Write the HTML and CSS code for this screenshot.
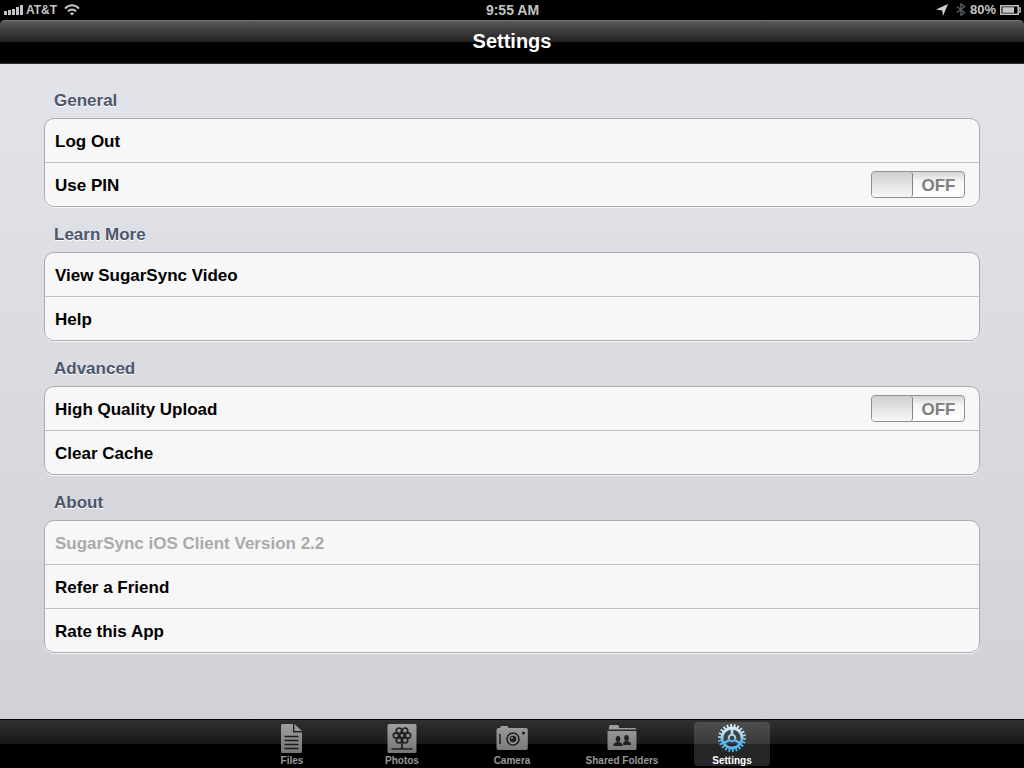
FILE: index.html
```html
<!DOCTYPE html>
<html lang="en">
<head>
  <meta charset="UTF-8">
  <meta name="viewport" content="width=device-width, initial-scale=1.0">
  <title>SugarSync - Settings</title>
  <link rel="stylesheet" href="styles.css">
</head>
<body>
  <div class="status-bar">
    <div class="status-left">
      <svg width="19" height="10" viewBox="0 0 19 10" fill="#c4c4c4">
        <rect x="0" y="6" width="3" height="4"/>
        <rect x="4" y="5" width="3" height="5"/>
        <rect x="8" y="4" width="3" height="6"/>
        <rect x="12" y="2" width="3" height="8"/>
        <rect x="16" y="0" width="3" height="10"/>
      </svg>
      <span class="carrier">AT&amp;T</span>
      <svg width="16" height="12" viewBox="0 0 16 12" fill="none" stroke="#c4c4c4" stroke-width="2">
        <path d="M1 4.6C5 .2 11 .2 15 4.6"/>
        <path d="M3.8 7.4c2.6-2.6 5.8-2.6 8.4 0"/>
        <path d="M8 11.6L5.8 9.3c1.4-1.2 3-1.2 4.4 0z" fill="#c4c4c4" stroke="none"/>
      </svg>
    </div>
    <div class="status-time">9:55 AM</div>
    <div class="status-right">
      <svg width="12" height="12" viewBox="0 0 12 12" fill="#d0d0d0">
        <path d="M12 0L7 12 6.2 6.4 0 5.6z"/>
      </svg>
      <svg width="10" height="13" viewBox="0 0 10 13" fill="none" stroke="#5a5a5a" stroke-width="1.5">
        <path d="M1 3.5l7.500 6L5 12.200V.800l3.500 2.700L1 9.500"/>
      </svg>
      <span>80%</span>
      <svg width="21" height="10" viewBox="0 0 21 10">
        <rect x=".75" y=".75" width="17.5" height="8.5" fill="none" stroke="#c4c4c4" stroke-width="1.5"/>
        <rect x="2.5" y="2.2" width="11.5" height="5.6" fill="#c4c4c4"/>
        <path d="M18.5 3h1.7v4h-1.7" fill="none" stroke="#c4c4c4" stroke-width="1.3"/>
      </svg>
    </div>
  </div>

  <header>
    <h1>Settings</h1>
  </header>

  <main class="content">
    <section>
      <h2>General</h2>
      <div class="group">
        <button class="row" type="button">Log Out</button>
        <div class="row">
          <label for="use-pin">Use PIN</label>
          <label class="switch">
            <input type="checkbox" id="use-pin">
            <span>OFF</span>
          </label>
        </div>
      </div>
    </section>

    <section>
      <h2>Learn More</h2>
      <div class="group">
        <button class="row" type="button">View SugarSync Video</button>
        <button class="row" type="button">Help</button>
      </div>
    </section>

    <section>
      <h2>Advanced</h2>
      <div class="group">
        <div class="row">
          <label for="hq-upload">High Quality Upload</label>
          <label class="switch">
            <input type="checkbox" id="hq-upload">
            <span>OFF</span>
          </label>
        </div>
        <button class="row" type="button">Clear Cache</button>
      </div>
    </section>

    <section>
      <h2>About</h2>
      <div class="group">
        <div class="row version">SugarSync iOS Client Version 2.2</div>
        <button class="row" type="button">Refer a Friend</button>
        <button class="row" type="button">Rate this App</button>
      </div>
    </section>
  </main>

  <nav class="tab-bar">
    <a class="tab" href="#files">
      <svg width="32" height="32" viewBox="0 0 32 32">
        <defs>
          <linearGradient id="grey" x1="0" y1="0" x2="0" y2="32" gradientUnits="userSpaceOnUse">
            <stop offset="0" stop-color="#a2a2a2"/>
            <stop offset="1" stop-color="#747474"/>
          </linearGradient>
        </defs>
        <path d="M5 3.5Q5 2 6.5 2H17v8.5h9V29.5Q26 31 24.5 31h-18Q5 31 5 29.5z" fill="url(#grey)"/>
        <path d="M18.500 2L26 9h-7.500z" fill="url(#grey)"/>
        <path d="M8.500 14.500h14M8.500 18.500h14M8.500 22.500h14M8.500 26.500h14" stroke="#1c1c1c" stroke-width="1.3"/>
      </svg>
      <span>Files</span>
    </a>
    <a class="tab" href="#photos">
      <svg width="32" height="32" viewBox="0 0 32 32">
        <rect x="1.5" y="2" width="29" height="29" rx="1.5" fill="url(#grey)"/>
        <g fill="none" stroke="#202020" stroke-width="1.7">
          <circle cx="16" cy="13.5" r="2.3"/>
          <circle cx="10" cy="13.5" r="2.7"/>
          <circle cx="22" cy="13.5" r="2.7"/>
          <circle cx="13" cy="8.7" r="2.7"/>
          <circle cx="19" cy="8.7" r="2.7"/>
          <circle cx="13" cy="18.3" r="2.7"/>
          <circle cx="19" cy="18.3" r="2.7"/>
          <path d="M16 16v10.5M5.500 27h8.500q2 0 2-2 0 2 2 2h8.500"/>
        </g>
      </svg>
      <span>Photos</span>
    </a>
    <a class="tab" href="#camera">
      <svg width="32" height="32" viewBox="0 0 32 32">
        <path d="M.5 8Q.5 6 2.500 6H4q0-2 2-2h4.500q2 0 2 2H30q1.800 0 1.800 2v18q0 2-1.800 2H2.500q-2 0-2-2z" fill="url(#grey)"/>
        <path d="M4 12v10" stroke="#202020" stroke-width="1.5"/>
        <circle cx="17" cy="17" r="6" fill="#8c8c8c" stroke="#202020" stroke-width="1.6"/>
        <circle cx="17" cy="17" r="3.3" fill="#202020"/>
        <circle cx="16" cy="16" r="1" fill="#9a9a9a"/>
        <circle cx="27.5" cy="11" r="1.5" fill="#202020"/>
      </svg>
      <span>Camera</span>
    </a>
    <a class="tab" href="#shared">
      <svg width="32" height="32" viewBox="0 0 32 32">
        <path d="M3 7V4.500q0-1.500 1.500-1.500h7q1.500 0 1.500 1.500V6h16q1.500 0 1.500 1.500H1.500q0-.5 1.500-.5z" fill="#9c9c9c"/>
        <path d="M1.500 9h29v17.500q0 1.500-1.500 1.500H3q-1.500 0-1.500-1.500z" fill="url(#grey)"/>
        <g fill="#202020">
          <ellipse cx="12" cy="17" rx="2.3" ry="2.9"/>
          <path d="M7.500 24v-1.500q0-1.500 3.300-2.500h2.400q3.300 1 3.300 2.500V24z"/>
          <ellipse cx="20.5" cy="16" rx="2.3" ry="2.9"/>
          <path d="M17.300 23v-2.500l2-1.500h2.400q3.300 1 3.300 2.500V23z"/>
        </g>
      </svg>
      <span>Shared Folders</span>
    </a>
    <a class="tab active" href="#settings" aria-current="page">
      <svg width="32" height="32" viewBox="0 0 32 32">
        <defs>
          <linearGradient id="blue" x1="0" y1="2" x2="0" y2="30" gradientUnits="userSpaceOnUse">
            <stop offset="0" stop-color="#e8f5fd"/>
            <stop offset=".5" stop-color="#9bd0f2"/>
            <stop offset=".55" stop-color="#61b6eb"/>
            <stop offset="1" stop-color="#4fb4ee"/>
          </linearGradient>
        </defs>
        <g fill="none" stroke="url(#blue)">
          <circle cx="16" cy="16" r="12.5" stroke-width="3" pathLength="88" stroke-dasharray="2 2"/>
          <circle cx="16" cy="16" r="10" stroke-width="2.8"/>
          <circle cx="16" cy="16" r="3.3" stroke-width="2"/>
          <path d="M16.01 6L16 12.5M13.2 18L7.500 21.500M18.8 18l5.700 3.500" stroke-width="2.6"/>
        </g>
      </svg>
      <span>Settings</span>
    </a>
  </nav>
</body>
</html>
```
FILE: styles.css
```css
* { box-sizing: border-box; margin: 0; padding: 0; }
body {
  display: flex;
  flex-direction: column;
  min-height: 100vh;
  background-color: #000;
  color: #000;
  font-family: "Liberation Sans", Arial, Helvetica, sans-serif;
  font-weight: bold;
}

.status-bar {
  display: grid;
  grid-template-columns: 1fr auto 1fr;
  align-items: center;
  height: 20px;
  padding: 0 3px 1px 4px;
  color: #c4c4c4;
  font-size: 13px;
}
.status-left, .status-right { display: flex; align-items: center; }
.status-left { gap: 3px; }
.carrier { margin-right: 4px; font-size: 12px; }
.status-time { font-size: 14px; }
.status-right { justify-content: flex-end; gap: 4px; }
.status-right svg:first-child { margin-right: 4px; }

header {
  height: 44px;
  border-top: 1px solid #777;
  border-bottom: 1px solid #2d2d2d;
  border-radius: 5px 5px 0 0;
  background: linear-gradient(#5a5a5a, #202020 50%, #000 50%);
}
h1 {
  color: #fff;
  font-size: 20px;
  line-height: 41px;
  text-align: center;
}

.content {
  flex: 1;
  padding: 9px 44px 65px;
  background: linear-gradient(#e2e4e9, #d0d2d7);
}
h2 {
  height: 45px;
  padding: 17px 10px 0;
  color: #4c566c;
  font-size: 17px;
  line-height: 22px;
  text-shadow: 0 1px 0 #fff;
}
.group {
  overflow: hidden;
  border: 1px solid #aaacb0;
  border-radius: 10px;
  background-color: #f7f7f7;
  box-shadow: 0 1px 0 #f4f4f6;
}
.row {
  display: flex;
  align-items: center;
  justify-content: space-between;
  width: 100%;
  height: 44px;
  padding: 2px 14px 0 10px;
  border: none;
  border-bottom: 1px solid #bfc0c2;
  background: none;
  color: #000;
  font: inherit;
  font-size: 17px;
  text-align: left;
}
.row:last-child { height: 43px; border-bottom: none; }
.row.version { color: #aaa; }

.switch {
  display: flex;
  width: 94px;
  height: 27px;
  margin-bottom: 2px;
  border: 1px solid #909090;
  border-radius: 4px;
  background: linear-gradient(#d5d5d5, #f5f5f5 35%, #fff);
  color: #7f7f7f;
}
.switch input {
  appearance: none;
  width: 41px;
  border-right: 1px solid #858585;
  border-radius: 3px;
  background: linear-gradient(#cfcfcf, #f7f7f7);
}
.switch span {
  flex: 1;
  line-height: 27px;
  text-align: center;
}

.tab-bar {
  display: flex;
  justify-content: center;
  gap: 34px;
  height: 49px;
  padding-top: 2px;
  border-top: 1px solid #000;
  background: linear-gradient(#303030, #181818 50%, #000 50%);
}
.tab {
  display: flex;
  flex-direction: column;
  align-items: center;
  width: 76px;
  height: 44px;
  border-radius: 4px;
  color: #999;
  font-size: 10px;
  line-height: 14px;
  text-decoration: none;
  white-space: nowrap;
}
.tab svg { flex: none; }
.tab.active { background-color: rgba(255, 255, 255, 0.15); color: #fff; }
```
